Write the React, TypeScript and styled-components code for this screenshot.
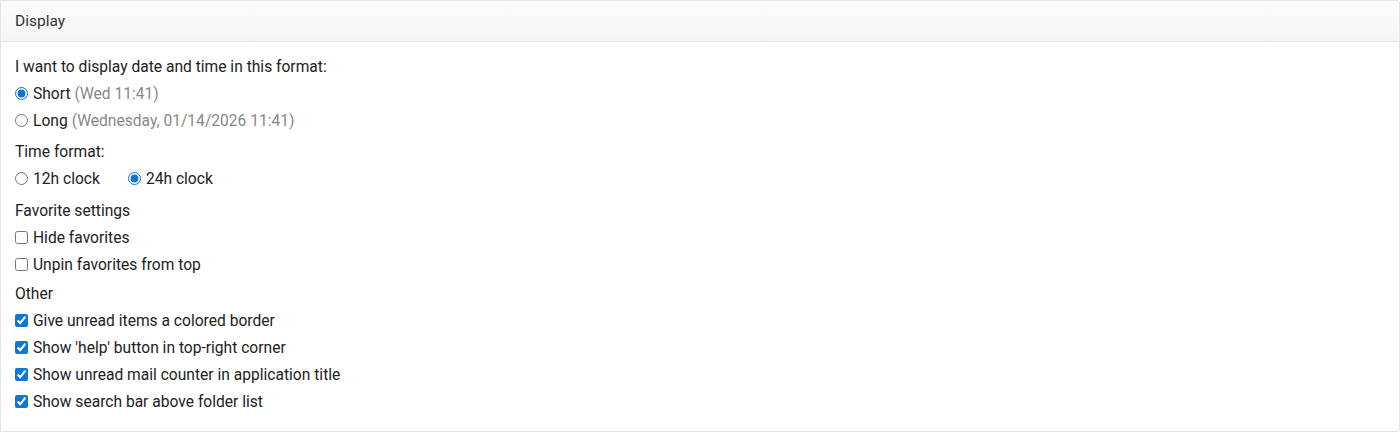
import React, { useState } from 'react'
import styled, { createGlobalStyle } from 'styled-components'

const GlobalStyle = createGlobalStyle`
  body {
    margin: 0;
    background: #fff;
    font-family: Roboto, 'Liberation Sans', sans-serif;
  }
`

const Panel = styled.section`
  border: 1px solid #e4e4e4;
  border-radius: 0 3px 3px 0;
  width: 1400px;
  box-sizing: border-box;
  height: 432px;
  overflow: hidden;
`

const PanelHeader = styled.header`
  height: 41px;
  box-sizing: border-box;
  display: flex;
  align-items: center;
  padding: 0 14px;
  background: linear-gradient(#fcfcfc, #f5f5f5);
  border-bottom: 1px solid #e4e4e4;
  font-size: 15.5px;
  color: #333;
`

const PanelBody = styled.div`
  padding: 13px 14px 16px;
`

const Group = styled.fieldset<{ $gap?: number }>`
  border: 0;
  margin: ${p => p.$gap ?? 0}px 0 0;
  padding: 0;
`

const GroupTitle = styled.legend`
  padding: 0;
  font-size: 15.6px;
  line-height: 25px;
  color: #222;
`

const Options = styled.div<{ $inline?: boolean }>`
  display: flex;
  flex-direction: ${p => (p.$inline ? 'row' : 'column')};
  gap: ${p => (p.$inline ? '28px' : '0')};
`

const Option = styled.label`
  display: flex;
  align-items: center;
  height: 27px;
  font-size: 15.6px;
  color: #222;
  cursor: pointer;

  input {
    width: 13px;
    height: 13px;
    margin: 0 5px 0 0;
    accent-color: #0b76dc;
  }
`

const Hint = styled.span`
  color: #888;
  margin-left: 4px;
`

interface RadioGroupProps {
  name: string;
  value: string;
  inline?: boolean;
  choices: { value: string; label: string; hint?: string }[];
  onChange: (value: string) => void;
}

const RadioGroup = ({ name, value, inline, choices, onChange }: RadioGroupProps): React.ReactElement => (
  <Options $inline={inline}>
    {choices.map(c => (
      <Option key={c.value}>
        <input type="radio" name={name} checked={value === c.value} onChange={() => onChange(c.value)} />
        {c.label}
        {c.hint && <Hint>{c.hint}</Hint>}
      </Option>
    ))}
  </Options>
)

const favoriteItems = [
  { key: 'hideFavorites', label: 'Hide favorites' },
  { key: 'unpinFavorites', label: 'Unpin favorites from top' },
]

const otherItems = [
  { key: 'unreadBorder', label: 'Give unread items a colored border' },
  { key: 'helpButton', label: "Show 'help' button in top-right corner" },
  { key: 'unreadCounter', label: 'Show unread mail counter in application title' },
  { key: 'searchBar', label: 'Show search bar above folder list' },
]

const App = (): React.ReactElement => {
  const [dateFormat, setDateFormat] = useState('short')
  const [clock, setClock] = useState('24h')
  const [flags, setFlags] = useState<Record<string, boolean>>({
    hideFavorites: false,
    unpinFavorites: false,
    unreadBorder: true,
    helpButton: true,
    unreadCounter: true,
    searchBar: true,
  })

  const toggle = (key: string) => setFlags(f => ({ ...f, [key]: !f[key] }))

  const renderChecks = (items: { key: string; label: string }[]) => (
    <Options>
      {items.map(item => (
        <Option key={item.key}>
          <input type="checkbox" checked={flags[item.key]} onChange={() => toggle(item.key)} />
          {item.label}
        </Option>
      ))}
    </Options>
  )

  return (
    <>
      <GlobalStyle />
      <Panel>
        <PanelHeader>Display</PanelHeader>
        <PanelBody>
          <Group>
            <GroupTitle>I want to display date and time in this format:</GroupTitle>
            <RadioGroup
              name="dateFormat"
              value={dateFormat}
              onChange={setDateFormat}
              choices={[
                { value: 'short', label: 'Short', hint: '(Wed 11:41)' },
                { value: 'long', label: 'Long', hint: '(Wednesday, 01/14/2026 11:41)' },
              ]}
            />
          </Group>
          <Group $gap={6}>
            <GroupTitle>Time format:</GroupTitle>
            <RadioGroup
              name="clock"
              inline
              value={clock}
              onChange={setClock}
              choices={[
                { value: '12h', label: '12h clock' },
                { value: '24h', label: '24h clock' },
              ]}
            />
          </Group>
          <Group $gap={7}>
            <GroupTitle>Favorite settings</GroupTitle>
            {renderChecks(favoriteItems)}
          </Group>
          <Group $gap={4}>
            <GroupTitle>Other</GroupTitle>
            {renderChecks(otherItems)}
          </Group>
        </PanelBody>
      </Panel>
    </>
  )
}

export default App
